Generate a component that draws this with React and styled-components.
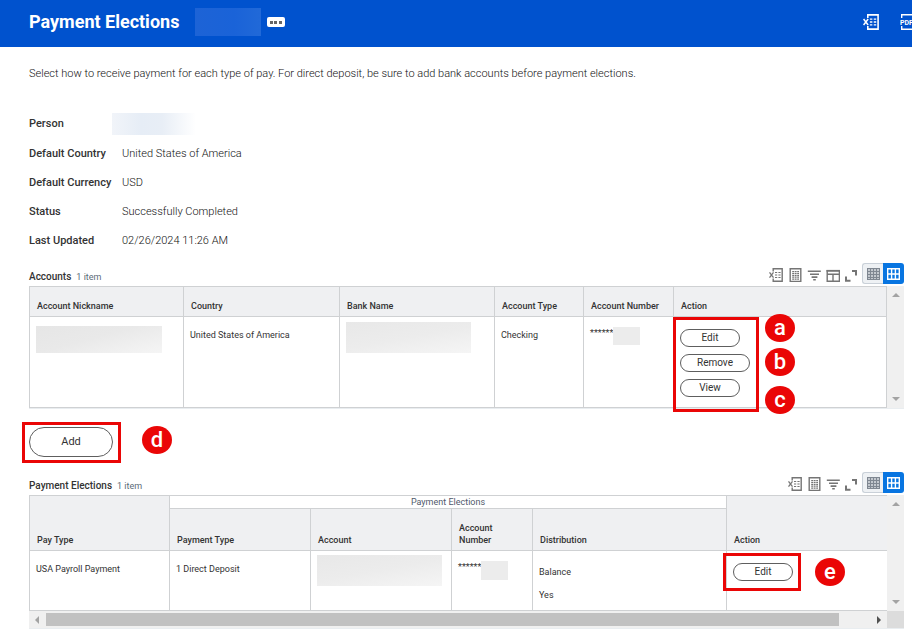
import React from 'react';
import styled, { createGlobalStyle, css } from 'styled-components';

const colors = {
  header: '#0052ce',
  text: '#333333',
  strong: '#111111',
  muted: '#5b6b78',
  line: '#cfd1d3',
  head: '#eff0f2',
  icon: '#757575',
  active: '#0875e1',
  mark: '#ea0606',
};

const GlobalStyle = createGlobalStyle`
  * {
    box-sizing: border-box;
  }
  body {
    margin: 0;
    background: #ffffff;
    color: ${colors.text};
    font-family: Roboto, 'Liberation Sans', sans-serif;
    font-size: 11px;
    line-height: 16px;
    overflow-x: hidden;
  }
  button {
    font: inherit;
    color: inherit;
    cursor: pointer;
  }
`;

const Header = styled.header`
  display: flex;
  align-items: center;
  height: 47px;
  padding: 0 0 3px 29px;
  background: ${colors.header};
  color: #ffffff;
  overflow: hidden;
`;

const Title = styled.h1`
  margin: 0 16px 0 0;
  font-size: 18px;
  line-height: 24px;
  font-weight: 700;
  white-space: nowrap;
`;

const MoreButton = styled.button`
  display: flex;
  align-items: center;
  justify-content: center;
  width: 18px;
  height: 10px;
  margin-left: 6px;
  padding: 0;
  border: 0;
  border-radius: 2px;
  background: #ffffff;
`;

const HeaderActions = styled.div`
  display: flex;
  gap: 21px;
  margin-left: auto;
  margin-right: -4px;
`;

const IconButton = styled.button`
  display: flex;
  padding: 0;
  border: 0;
  background: none;
  color: ${(props) => props.$color || colors.icon};
`;

const Main = styled.main`
  padding: 19px 8px 8px 29px;
`;

const Intro = styled.p`
  margin: 0 0 27px;
  font-weight: 300;
  color: ${colors.strong};
`;

const Facts = styled.dl`
  margin: 0 0 8px;
`;

const Fact = styled.div`
  display: flex;
  align-items: center;
  height: 29px;
  &:first-child {
    height: 30px;
  }
`;

const FactLabel = styled.dt`
  width: 83px;
  font-weight: 500;
  white-space: nowrap;
`;

const FactValue = styled.dd`
  margin: 0;
  padding-left: ${(props) => (props.$flush ? 0 : 10)}px;
  font-weight: 300;
  color: ${colors.strong};
`;

const Redacted = styled.span`
  display: block;
  flex: none;
  width: ${(props) => props.$width}px;
  height: ${(props) => props.$height}px;
  background: ${(props) => props.$fill || 'linear-gradient(170deg, #e8e8e8, #ececec 50%, #f5f5f5)'};
`;

const SectionBar = styled.div`
  display: flex;
  align-items: flex-end;
  padding-bottom: 2px;
`;

const SectionTitle = styled.h2`
  margin: 0 5px 0 0;
  font-size: 10px;
  line-height: 14px;
  font-weight: 500;
`;

const ItemCount = styled.span`
  color: ${colors.muted};
  font-size: 9px;
  line-height: 14px;
`;

const Toolbar = styled.div`
  display: flex;
  align-items: flex-end;
  gap: 3px;
  margin-left: auto;
`;

const ToolbarIcons = styled.div`
  display: flex;
  gap: 5px;
  padding-bottom: 2px;
`;

const ViewToggle = styled.div`
  display: flex;
`;

const ToggleButton = styled.button`
  display: flex;
  align-items: center;
  justify-content: center;
  width: 21px;
  height: 21px;
  padding: 0;
  border: 1px solid #c9d0d8;
  border-right: 0;
  border-radius: 3px 0 0 3px;
  background: #eef1f4;
  color: #7f8791;
  ${(props) => props.$active && css`
    border: 0;
    border-radius: 0 3px 3px 0;
    background: ${colors.active};
    color: #ffffff;
  `}
`;

const GridFrame = styled.div`
  display: flex;
  border-bottom: 1px solid #e9edf0;
`;

const GridBody = styled.div`
  flex: 1;
  min-width: 0;
`;

const DataTable = styled.table`
  width: 100%;
  table-layout: fixed;
  border-collapse: separate;
  border-spacing: 0;
  border-top: 1px solid ${colors.line};
  border-left: 1px solid ${colors.line};
  font-size: 9px;
  line-height: 12px;
`;

const HeadCell = styled.th`
  height: ${(props) => props.$height}px;
  padding: 0 7px 4px;
  border-right: ${(props) => (props.$open ? 0 : 1)}px solid ${colors.line};
  border-bottom: 1px solid ${colors.line};
  background: ${colors.head};
  font-weight: 500;
  text-align: left;
  vertical-align: bottom;
`;

const GroupCell = styled(HeadCell)`
  padding: 0;
  background: #ffffff;
  color: #51596b;
  font-weight: 400;
  text-align: center;
`;

const Cell = styled.td`
  height: ${(props) => props.$height}px;
  padding: ${(props) => (props.$top === undefined ? 12 : props.$top)}px 6px 0;
  border-right: ${(props) => (props.$open ? 0 : 1)}px solid ${colors.line};
  border-bottom: 1px solid ${colors.line};
  vertical-align: top;
`;

const MaskedNumber = styled.span`
  display: flex;
`;

const Line = styled.span`
  display: block;
  & + & {
    margin-top: 11px;
  }
`;

const VerticalScroll = styled.div`
  display: flex;
  flex-direction: column;
  justify-content: space-between;
  align-items: center;
  width: 17px;
  padding: 7px 0;
  background: #f0f0f0;
`;

const HorizontalScroll = styled.div`
  display: flex;
  align-items: center;
  height: 17px;
  padding: 0 6px;
  background: #f0f0f0;
`;

const ScrollThumb = styled.div`
  flex: 1;
  height: 13px;
  margin: 0 38px 0 7px;
  background: #c1c1c1;
`;

const ScrollCorner = styled.div`
  width: 17px;
  height: 17px;
  background: #dcdcdc;
`;

const ScrollColumn = styled.div`
  display: flex;
  flex-direction: column;
  & > ${VerticalScroll} {
    flex: 1;
  }
`;

const Arrow = styled.svg`
  display: block;
  flex: none;
  fill: ${(props) => props.$color || '#a3a3a3'};
`;

const Marked = styled.div`
  position: relative;
  display: flex;
  flex-direction: column;
  align-items: flex-start;
  gap: 7px;
  width: ${(props) => props.$width}px;
`;

const Outline = styled.div`
  position: absolute;
  inset: ${(props) => props.$inset};
  border: 3px solid ${colors.mark};
  pointer-events: none;
`;

const Badge = styled.span`
  position: absolute;
  top: ${(props) => props.$top}px;
  left: ${(props) => props.$left}px;
  width: 30px;
  height: 28px;
  border-radius: 50%;
  background: ${colors.mark};
  color: #ffffff;
  font-size: 22px;
  line-height: 27px;
  font-weight: 500;
  text-align: center;
`;

const PillButton = styled.button`
  min-width: 60px;
  height: 18px;
  padding: 0 16px;
  border: 1px solid #5e5e5e;
  border-radius: 9px;
  background: #ffffff;
  font-size: 10px;
  line-height: 14px;
`;

const AddButton = styled(PillButton)`
  width: 84px;
  height: 30px;
  border-radius: 15px;
  font-size: 11px;
`;

const AddRow = styled.div`
  padding: 18px 0 15px;
`;

const Icon = ({ children, size = 14 }) => (
  <svg width={size} height={size} viewBox="0 0 14 14" fill="none" stroke="currentColor" strokeWidth="1.4" aria-hidden="true">
    {children}
  </svg>
);

const ExcelIcon = ({ size }) => (
  <Icon size={size}>
    <path d="M4.2 3.4V.8h9v12.4h-9v-2.6" />
    <path d="M.5 4.4l4 5.2M4.5 4.4l-4 5.2" strokeWidth="1.3" />
    <path d="M6 4.5h2.2M9.4 4.5h2.2M6 7h2.2M9.4 7h2.2M6 9.5h2.2M9.4 9.5h2.2" strokeWidth="1.2" />
  </Icon>
);

const PdfIcon = () => (
  <svg width="16" height="16" viewBox="0 0 16 16" fill="none" stroke="currentColor" strokeWidth="1.4" aria-hidden="true">
    <path d="M1.7 4V.7h12.6V4M1.7 12v3.3h12.6V12" />
    <text x="0" y="11" fill="currentColor" stroke="none" fontFamily="Roboto, sans-serif" fontSize="7" fontWeight="700">PDF</text>
  </svg>
);

const SheetIcon = () => (
  <Icon>
    <path d="M2.2.8h10.6v12.6H2.2z" />
    <path d="M4.2 3.5h2M6.8 3.5h1.8M9.2 3.5H11M4.2 5.4h2M6.8 5.4h1.8M9.2 5.4H11M4.2 7.3h2M6.8 7.3h1.8M9.2 7.3H11M4.2 9.2h2M6.8 9.2h1.8M9.2 9.2H11M4.2 11.1h2M6.8 11.1h1.8M9.2 11.1H11" strokeWidth="1.2" />
  </Icon>
);

const FilterIcon = () => (
  <Icon>
    <path d="M.8 3.3h13M3 6.2h9M4.6 9.1h5.8M6.2 11.8h2.6" strokeWidth="1.6" />
  </Icon>
);

const ColumnsIcon = () => (
  <Icon>
    <path d="M1.2 2.6h12.2v10.6H1.2zM1 6.2h12.5M7 6v7" />
    <path d="M.5 2.8h13.6" strokeWidth="1.8" />
  </Icon>
);

const ExpandIcon = () => (
  <Icon>
    <path d="M7 3h4v4.5M1 8.5v4.2h4.5" strokeWidth="2" />
  </Icon>
);

const DenseGridIcon = () => (
  <svg width="13" height="12" viewBox="0 0 13 12" fill="none" stroke="currentColor" shapeRendering="crispEdges" aria-hidden="true">
    <path d="M.5.5h12v11H.5z" fill="#c3c8ce" />
    <path d="M0 3.5h13M0 6.5h13M0 9.5h13M3.5 0v12M6.5 0v12M9.5 0v12" />
  </svg>
);

const WideGridIcon = () => (
  <svg width="13" height="12" viewBox="0 0 13 12" fill="none" stroke="currentColor" strokeWidth="1.4" aria-hidden="true">
    <path d="M.7.7h11.6v10.6H.7zM0 6h13M4.6 0v12M8.4 0v12" />
  </svg>
);

const ScrollArrows = () => (
  <VerticalScroll aria-hidden="true">
    <Arrow width="8" height="4"><path d="M0 4l4-4 4 4z" /></Arrow>
    <Arrow width="8" height="4"><path d="M0 0l4 4 4-4z" /></Arrow>
  </VerticalScroll>
);

const GridToolbar = ({ columns }) => (
  <Toolbar>
    <ToolbarIcons>
      <IconButton aria-label="Export to Excel"><ExcelIcon /></IconButton>
      <IconButton aria-label="View as worksheet"><SheetIcon /></IconButton>
      <IconButton aria-label="Filter"><FilterIcon /></IconButton>
      {columns && <IconButton aria-label="Columns"><ColumnsIcon /></IconButton>}
      <IconButton aria-label="Full screen"><ExpandIcon /></IconButton>
    </ToolbarIcons>
    <ViewToggle>
      <ToggleButton aria-label="Compact view"><DenseGridIcon /></ToggleButton>
      <ToggleButton $active aria-label="Expanded view"><WideGridIcon /></ToggleButton>
    </ViewToggle>
  </Toolbar>
);

const facts = [
  { label: 'Default Country', value: 'United States of America' },
  { label: 'Default Currency', value: 'USD' },
  { label: 'Status', value: 'Successfully Completed' },
  { label: 'Last Updated', value: '02/26/2024 11:26 AM' },
];

const accountHeads = ['Account Nickname', 'Country', 'Bank Name', 'Account Type', 'Account Number', 'Action'];

const AccountsGrid = () => (
  <section>
    <SectionBar>
      <SectionTitle>Accounts</SectionTitle>
      <ItemCount>1 item</ItemCount>
      <GridToolbar columns />
    </SectionBar>
    <GridFrame>
      <GridBody>
        <DataTable>
          <colgroup>
            <col width="154" />
            <col width="156" />
            <col width="155" />
            <col width="89" />
            <col width="90" />
            <col />
          </colgroup>
          <thead>
            <tr>
              {accountHeads.map((head) => <HeadCell key={head} $height={30}>{head}</HeadCell>)}
            </tr>
          </thead>
          <tbody>
            <tr>
              <Cell $height={91} $top={9}>
                <Redacted $width={126} $height={27} $fill="linear-gradient(165deg, #e6e6e6, #e9e9e9 45%, #f5f5f5)" />
              </Cell>
              <Cell>United States of America</Cell>
              <Cell $top={5}><Redacted $width={125} $height={31} /></Cell>
              <Cell>Checking</Cell>
              <Cell $top={10}>
                <MaskedNumber>******<Redacted $width={27} $height={18} $fill="#ececec" /></MaskedNumber>
              </Cell>
              <Cell>
                <Marked $width={71}>
                  <PillButton>Edit</PillButton>
                  <PillButton>Remove</PillButton>
                  <PillButton>View</PillButton>
                  <Outline $inset="-12px -8px -15px -7px" />
                  <Badge $top={-15} $left={85}>a</Badge>
                  <Badge $top={19} $left={85}>b</Badge>
                  <Badge $top={57} $left={85}>c</Badge>
                </Marked>
              </Cell>
            </tr>
          </tbody>
        </DataTable>
      </GridBody>
      <ScrollArrows />
    </GridFrame>
  </section>
);

const ElectionsGrid = () => (
  <section>
    <SectionBar>
      <SectionTitle>Payment Elections</SectionTitle>
      <ItemCount>1 item</ItemCount>
      <GridToolbar />
    </SectionBar>
    <GridFrame>
      <GridBody>
        <DataTable>
          <colgroup>
            <col width="140" />
            <col width="141" />
            <col width="141" />
            <col width="81" />
            <col width="194" />
            <col />
          </colgroup>
          <thead>
            <tr>
              <HeadCell rowSpan={2}>Pay Type</HeadCell>
              <GroupCell colSpan={4} $height={13}>Payment Elections</GroupCell>
              <HeadCell rowSpan={2} $open>Action</HeadCell>
            </tr>
            <tr>
              <HeadCell $height={42}>Payment Type</HeadCell>
              <HeadCell>Account</HeadCell>
              <HeadCell>Account Number</HeadCell>
              <HeadCell>Distribution</HeadCell>
            </tr>
          </thead>
          <tbody>
            <tr>
              <Cell $height={60}>USA Payroll Payment</Cell>
              <Cell>1 Direct Deposit</Cell>
              <Cell $top={4}><Redacted $width={125} $height={31} /></Cell>
              <Cell $top={10}>
                <MaskedNumber>******<Redacted $width={27} $height={19} $fill="#ececec" /></MaskedNumber>
              </Cell>
              <Cell $top={15}>
                <Line>Balance</Line>
                <Line>Yes</Line>
              </Cell>
              <Cell $open>
                <Marked $width={60}>
                  <PillButton>Edit</PillButton>
                  <Outline $inset="-10px -8px -10px -10px" />
                  <Badge $top={-5} $left={82}>e</Badge>
                </Marked>
              </Cell>
            </tr>
          </tbody>
        </DataTable>
        <HorizontalScroll aria-hidden="true">
          <Arrow width="4" height="8"><path d="M4 0L0 4l4 4z" /></Arrow>
          <ScrollThumb />
          <Arrow width="4" height="8" $color="#505050"><path d="M0 0l4 4-4 4z" /></Arrow>
        </HorizontalScroll>
      </GridBody>
      <ScrollColumn>
        <ScrollArrows />
        <ScrollCorner />
      </ScrollColumn>
    </GridFrame>
  </section>
);

const App = () => (
  <>
    <GlobalStyle />
    <Header>
      <Title>Payment Elections</Title>
      <Redacted $width={66} $height={28} $fill="linear-gradient(90deg, #1d63d6, #1a63d8 60%, #2169d8)" />
      <MoreButton aria-label="Related actions">
        <svg width="12" height="3" fill="#666666" aria-hidden="true">
          <path d="M0 0h3v3H0zM4 0h3v3H4zM9 0h3v3H9z" />
        </svg>
      </MoreButton>
      <HeaderActions>
        <IconButton $color="#ffffff" aria-label="Export to Excel"><ExcelIcon size={16} /></IconButton>
        <IconButton $color="#ffffff" aria-label="View printable version"><PdfIcon /></IconButton>
      </HeaderActions>
    </Header>
    <Main>
      <Intro>
        Select how to receive payment for each type of pay. For direct deposit, be sure to add bank accounts before payment elections.
      </Intro>
      <Facts>
        <Fact>
          <FactLabel>Person</FactLabel>
          <FactValue $flush>
            <Redacted $width={84} $height={22} $fill="linear-gradient(90deg, #f1f4f9, #e6edf6 35%, #e8eef6 60%, #ffffff)" />
          </FactValue>
        </Fact>
        {facts.map((fact) => (
          <Fact key={fact.label}>
            <FactLabel>{fact.label}</FactLabel>
            <FactValue>{fact.value}</FactValue>
          </Fact>
        ))}
      </Facts>
      <AccountsGrid />
      <AddRow>
        <Marked $width={84}>
          <AddButton>Add</AddButton>
          <Outline $inset="-5px -8px -6px -7px" />
          <Badge $top={-1} $left={113}>d</Badge>
        </Marked>
      </AddRow>
      <ElectionsGrid />
    </Main>
  </>
);

export default App;
